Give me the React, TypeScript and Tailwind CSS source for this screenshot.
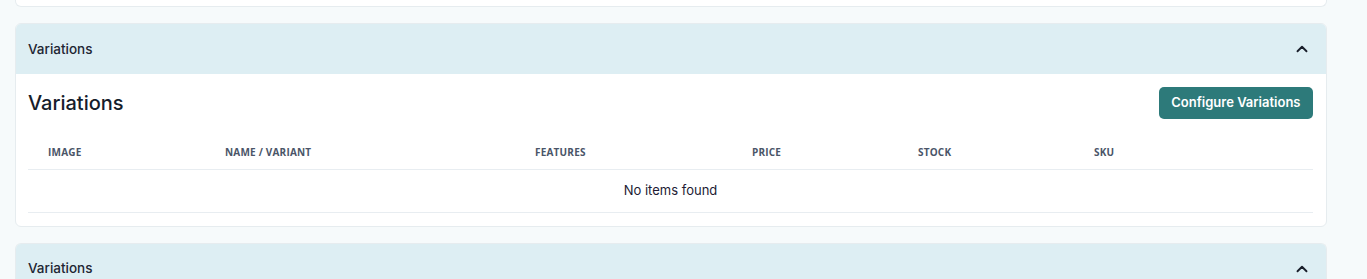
import { ChevronUp } from 'lucide-react';

const columns = [
    { label: 'Image', width: 'w-[177px]' },
    { label: 'Name / Variant', width: 'w-[310px]' },
    { label: 'Features', width: 'w-[217px]' },
    { label: 'Price', width: 'w-[166px]' },
    { label: 'Stock', width: 'w-[176px]' },
    { label: 'SKU', width: 'w-[239px]' },
];

const SectionHeader = ({ title }: { title: string }) => (
    <div className="flex h-[50px] items-center justify-between bg-[#ddeef3] pr-[13px] pl-[12px]">
        <span className="text-[13.5px] font-medium text-[#1e2633]">{title}</span>
        <ChevronUp className="mr-[2px] h-[18px] w-[18px] text-[#1a1f2b]" strokeWidth={2.5} />
    </div>
);

const App = () => {
    return (
        <div className="h-[279px] overflow-hidden bg-[#f6fafb] pr-[40px] pl-[15px]" style={{ fontFamily: 'Inter, "Noto Sans", sans-serif' }}>
            {/* previous card, only its bottom edge is visible */}
            <div className="h-[7px] rounded-b-md border-x border-b border-[#e6ecef] bg-white" />

            {/* Variations card */}
            <div className="mt-[16px] overflow-hidden rounded-md border border-[#e6ecef] bg-white">
                <SectionHeader title="Variations" />
                <div className="pt-[13px] pr-[13px] pb-[13px] pl-[12px]">
                    <div className="flex items-center justify-between">
                        <h2 className="text-[20px] font-medium text-[#161d2b]">Variations</h2>
                        <button className="h-[32px] rounded-[5px] bg-[#2d7a7a] px-[12.5px] text-[13px] font-semibold text-white">
                            Configure Variations
                        </button>
                    </div>

                    <table className="mt-[18px] w-full table-fixed border-collapse">
                        <thead>
                            <tr className="border-b border-[#e8edf1]">
                                {columns.map((col) => (
                                    <th
                                        key={col.label}
                                        className={`${col.width} h-[32px] px-[20px] text-left text-[10px] font-bold tracking-[0.2px] text-[#4a5568] uppercase`}
                                        style={{ fontFamily: '"Open Sans", sans-serif' }}
                                    >
                                        {col.label}
                                    </th>
                                ))}
                            </tr>
                        </thead>
                        <tbody>
                            <tr className="border-b border-[#e8edf1]">
                                <td colSpan={6} className="h-[43px] pt-[1px] text-center text-[13px] text-[#221b33]">
                                    No items found
                                </td>
                            </tr>
                        </tbody>
                    </table>
                </div>
            </div>

            {/* next card */}
            <div className="mt-[16px] overflow-hidden rounded-t-md border-x border-t border-[#e6ecef] bg-white">
                <SectionHeader title="Variations" />
            </div>
        </div>
    );
};

export default App;
